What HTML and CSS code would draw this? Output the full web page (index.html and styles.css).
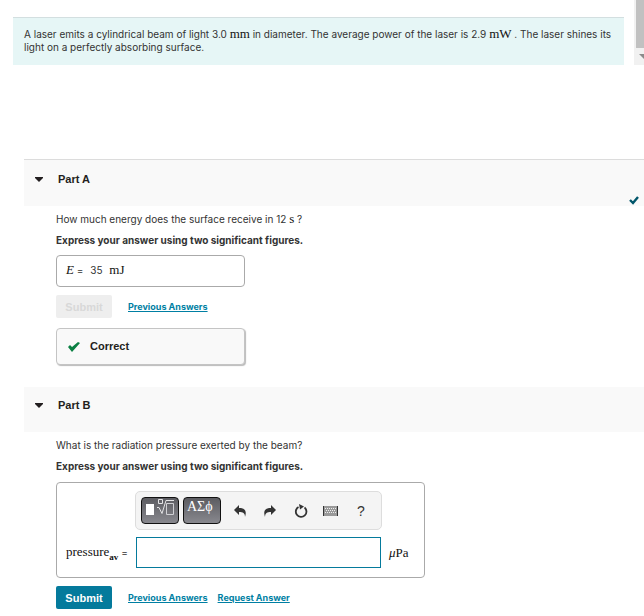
FILE: index.html
```html
<!DOCTYPE html>
<html lang="en">
<head>
  <meta charset="UTF-8" />
  <title>Laser radiation pressure</title>
  <link rel="stylesheet" href="styles.css">
</head>
<body>
  <div class="intro-pane">
    <p class="intro">A laser emits a cylindrical beam of light 3.0 <span class="math">mm</span> in diameter. The average power of the laser is 2.9 <span class="math">mW</span> . The laser shines its light on a perfectly absorbing surface.</p>
    <div class="scrollbar">
      <div class="scroll-thumb"></div>
      <svg class="scroll-down" width="10" height="17" viewBox="0 0 10 17"><path d="M5 6h10l-5 5z" fill="#8b8b8b"/></svg>
    </div>
  </div>

  <section class="part part-a">
    <h2 class="part-header">
      <button class="toggle"><svg width="8" height="5" viewBox="0 0 8 5"><path d="M0 0h8v1L4 5 0 1z" fill="#231f20"/></svg>Part A</button>
      <svg class="done-mark" width="10" height="9" viewBox="0 0 10 9"><path d="M1 4l3 3 5-6" fill="none" stroke="#00566b" stroke-width="2.4"/></svg>
    </h2>
    <div class="part-body">
      <p>How much energy does the surface receive in 12 <span class="math">s</span> ?</p>
      <p class="instructions">Express your answer using two significant figures.</p>
      <div class="answer"><span class="math"><i>E</i></span> = <span class="value">35</span> <span class="math">mJ</span></div>
      <div class="actions">
        <button class="submit" disabled>Submit</button>
        <a href="#">Previous Answers</a>
      </div>
      <div class="feedback">
        <svg width="12" height="10" viewBox="0 0 12 10"><path d="M0 5l2-2 2 2 6-5 2 1-8 9z" fill="#0b8043"/></svg>
        Correct
      </div>
    </div>
  </section>

  <section class="part part-b">
    <h2 class="part-header">
      <button class="toggle"><svg width="8" height="5" viewBox="0 0 8 5"><path d="M0 0h8v1L4 5 0 1z" fill="#231f20"/></svg>Part B</button>
    </h2>
    <div class="part-body">
      <p>What is the radiation pressure exerted by the beam?</p>
      <p class="instructions">Express your answer using two significant figures.</p>
      <div class="entry">
        <div class="toolbar">
          <button class="palette" aria-label="Templates">
            <svg width="30" height="17" viewBox="0 0 30 17">
              <rect x="1" y="6" width="8" height="11" fill="#fff"/>
              <path d="M13.5 1.5h4v4h-4zM12 9.500h2l3 6 4-13h8" fill="none" stroke="#e4e4e6"/>
              <path d="M21.500 5.500h7v11h-7z" fill="none" stroke="#d0d0d4"/>
            </svg>
          </button>
          <button class="palette symbols">ΑΣϕ</button>
          <button class="tool" aria-label="Undo"><svg width="12" height="12" viewBox="0 0 12 12"><path d="M0 5l5-5v3c6 0 8 3 6 9 0-4-2-5-6-5v3z" fill="#333"/></svg></button>
          <button class="tool" aria-label="Redo"><svg width="12" height="12" viewBox="0 0 12 12"><path d="M12 5L7 0v3c-6 0-8 3-6 9 0-4 2-5 6-5v3z" fill="#333"/></svg></button>
          <button class="tool" aria-label="Reset"><svg width="14" height="14" viewBox="0 0 14 14"><path d="M4.500 3a5.300 5.300 0 1 0 6 .5" fill="none" stroke="#333" stroke-width="1.800"/><path d="M5 0l5 2.500-4 3z" fill="#333"/></svg></button>
          <button class="tool" aria-label="Keyboard"><svg width="15" height="10" viewBox="0 0 15 10"><path d="M0 0h15v10H0z" fill="#999"/><path d="M.5 0v10M14.500 0v10" stroke="#333"/><path d="M2 2.500h11M3 4.500h10M2 6.500h11" stroke="#eee" stroke-dasharray="1 1"/></svg></button>
          <button class="tool help" aria-label="Help">?</button>
        </div>
        <label class="entry-label" for="pressure"><span class="math">pressure<sub>av</sub></span> =</label>
        <input class="entry-input" id="pressure" type="text">
        <span class="math unit"><i>μ</i>Pa</span>
      </div>
      <div class="actions">
        <button class="submit">Submit</button>
        <a href="#">Previous Answers</a>
        <a href="#">Request Answer</a>
      </div>
    </div>
  </section>
</body>
</html>
```

FILE: styles.css
```css
body {
  margin: 0;
  background: #fff;
  color: #333;
  font-family: Inter, "Liberation Sans", Arial, sans-serif;
  font-size: 10px;
  line-height: 13px;
}

p {
  margin: 0;
}

button {
  font-family: "Liberation Sans", Arial, sans-serif;
  padding: 0;
  border: none;
  background: none;
  cursor: pointer;
}

.math {
  color: #111;
  font-family: "Liberation Serif", "Times New Roman", serif;
  font-size: 13px;
  line-height: 12px;
}

/* intro */
.intro-pane {
  display: flex;
  gap: 10px;
  padding-left: 13px;
  overflow: hidden;
}

.intro {
  flex: 1;
  margin-top: 17px;
  padding: 10px 10px 11px 11px;
  border-top: 1px solid #d3dfe0;
  background: #e6f6f6;
}

.scrollbar {
  display: flex;
  flex-direction: column;
  width: 10px;
  background: #f1f1f1;
}

.scroll-thumb {
  flex: 1;
  margin-left: 2px;
  background: #c1c1c1;
}

/* parts */
.part {
  margin-left: 24px;
}

.part-a {
  margin-top: 94px;
}

.part-b {
  margin-top: 22px;
}

.part-header {
  position: relative;
  margin: 0;
  padding: 11px 11px 19px;
  background: #f9f9f9;
}

.part-a .part-header {
  padding-top: 12px;
  border-top: 1px solid #dcdcdc;
}

.toggle {
  display: flex;
  align-items: center;
  gap: 15px;
  color: #231f20;
  font-size: 11px;
  font-weight: bold;
  line-height: 15px;
}

.done-mark {
  position: absolute;
  right: 5px;
  bottom: 1px;
}

.part-body {
  padding: 7px 32px 0;
}

.part-body p {
  margin-bottom: 8px;
}

.part-body .instructions {
  font-weight: bold;
}

.answer,
.feedback {
  box-sizing: border-box;
  max-width: 189px;
  border: 1px solid #aaa;
  border-radius: 4px;
}

.answer {
  padding: 8px 9px 9px;
}

.value {
  margin: 0 4px;
}

.actions {
  display: flex;
  align-items: center;
  gap: 10px;
  margin: 8px 0 10px;
}

.actions a {
  color: #007fa3;
  font-size: 9px;
  font-weight: bold;
}

.submit {
  width: 56px;
  height: 23px;
  margin-right: 6px;
  border-radius: 2px;
  background: #047a9c;
  color: #fff;
  font-size: 11px;
  font-weight: bold;
}

.submit:disabled {
  background: #eee;
  color: #d8d8d8;
}

.feedback {
  display: flex;
  align-items: center;
  gap: 10px;
  padding: 11px;
  border-color: #c4c4c4;
  background: #f9f9f9;
  box-shadow: 1px 1px 1px #bbb;
  color: #231f20;
  font-family: "Liberation Sans", Arial, sans-serif;
  font-size: 11px;
  font-weight: bold;
}

/* answer entry */
.entry {
  display: grid;
  grid-template-columns: 70px 1fr 35px;
  align-items: center;
  row-gap: 7px;
  box-sizing: border-box;
  max-width: 369px;
  margin-top: 9px;
  padding: 8px 8px 9px 9px;
  border: 1px solid #aaa;
  border-radius: 4px;
}

.toolbar {
  grid-column: 1 / -1;
  display: flex;
  align-items: center;
  box-sizing: border-box;
  height: 39px;
  margin: 0 34px 0 69px;
  padding: 0 5px;
  border: 1px solid #ddd;
  border-radius: 5px;
  background: #f4f4f4;
}

.palette {
  display: flex;
  justify-content: center;
  flex: none;
  box-sizing: border-box;
  width: 38px;
  height: 27px;
  margin-right: 4px;
  border: 1px solid #111;
  border-radius: 4px;
  background: linear-gradient(#5c5c61, #88888e);
  color: #fff;
  font-family: "Liberation Serif", "Times New Roman", serif;
  font-size: 14px;
  line-height: 18px;
}

.symbols {
  justify-content: flex-start;
  padding-left: 3px;
}

.tool {
  display: flex;
  align-items: center;
  justify-content: center;
  flex: 1;
  height: 27px;
  color: #333;
}

.help {
  font-size: 14px;
}

.entry-label {
  white-space: nowrap;
}

.entry-label sub {
  font-size: 9px;
  font-weight: bold;
  line-height: 0;
}

.entry-input {
  box-sizing: border-box;
  width: 100%;
  height: 31px;
  border: 1px solid #047a9c;
  background: #fff;
}

.unit {
  padding-left: 8px;
}
```
